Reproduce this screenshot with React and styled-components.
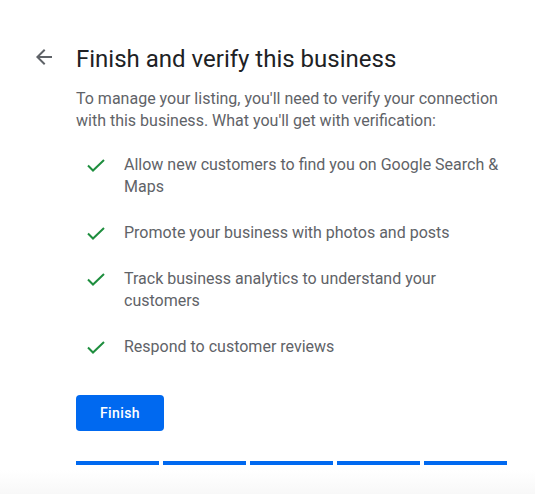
import React from 'react';
import styled, { createGlobalStyle } from 'styled-components';

const GlobalStyle = createGlobalStyle`
  html, body {
    margin: 0;
    padding: 0;
    background: #ffffff;
  }
  body {
    font-family: Roboto, "Liberation Sans", Arial, sans-serif;
    -webkit-font-smoothing: antialiased;
  }
`;

const Page = styled.div`
  width: 535px;
  height: 494px;
  box-sizing: border-box;
  background: linear-gradient(to bottom, #ffffff 0, #ffffff 470px, #f8f8f8 494px);
  padding: 45px 0 0 32px;
  display: flex;
  align-items: flex-start;
`;

const BackButton = styled.button`
  width: 24px;
  height: 24px;
  padding: 0;
  border: none;
  background: none;
  color: #5f6368;
  margin-right: 20px;
  display: flex;
  align-items: center;
  justify-content: center;
  cursor: pointer;
`;

const Content = styled.div`
  display: flex;
  flex-direction: column;
  width: 431px;
`;

const Title = styled.h1`
  margin: 0;
  font-size: 24px;
  font-weight: 400;
  line-height: 28px;
  color: #202124;
  letter-spacing: 0;
`;

const Intro = styled.p`
  margin: 15px 0 0;
  font-size: 16px;
  line-height: 22px;
  color: #5f6368;
`;

const Benefits = styled.ul`
  list-style: none;
  margin: 22px 0 0;
  padding: 0;
  display: flex;
  flex-direction: column;
  gap: 24px;
`;

const Benefit = styled.li`
  display: flex;
  align-items: flex-start;
  gap: 16px;
  padding-left: 8px;
  font-size: 16px;
  line-height: 22px;
  color: #5f6368;
`;

const CheckIcon = styled.svg`
  flex: none;
  width: 24px;
  height: 22px;
  color: #1e8e3e;
`;

const FinishButton = styled.button`
  margin-top: 37px;
  align-self: flex-start;
  width: 88px;
  height: 36px;
  border: none;
  border-radius: 4px;
  background: #0069f0;
  color: #ffffff;
  font-family: Roboto, "Liberation Sans", Arial, sans-serif;
  font-size: 14px;
  font-weight: 500;
  letter-spacing: 0.4px;
  cursor: pointer;
`;

const Progress = styled.div`
  margin-top: 30px;
  display: grid;
  grid-template-columns: repeat(5, 83px);
  gap: 4px;
`;

const Step = styled.div`
  height: 4px;
  background: ${p => (p.$done ? '#0069f0' : '#dadce0')};
`;

const benefits = [
  'Allow new customers to find you on Google Search & Maps',
  'Promote your business with photos and posts',
  'Track business analytics to understand your customers',
  'Respond to customer reviews',
];

const App = () => {
  return (
    <>
      <GlobalStyle />
      <Page>
        <BackButton aria-label="Back">
          <svg width="24" height="24" viewBox="0 0 24 24" fill="currentColor">
            <path d="M20 11H7.83l5.59-5.59L12 4l-8 8 8 8 1.41-1.41L7.83 13H20v-2z" />
          </svg>
        </BackButton>
        <Content>
          <Title>Finish and verify this business</Title>
          <Intro>
            To manage your listing, you'll need to verify your connection with this business. What you'll get with verification:
          </Intro>
          <Benefits>
            {benefits.map(text => (
              <Benefit key={text}>
                <CheckIcon viewBox="0 0 24 22" fill="none" stroke="currentColor" strokeWidth="2">
                  <path d="M4 11.5l5 5L20 6" />
                </CheckIcon>
                <span>{text}</span>
              </Benefit>
            ))}
          </Benefits>
          <FinishButton>Finish</FinishButton>
          <Progress>
            {[0, 1, 2, 3, 4].map(i => (
              <Step key={i} $done />
            ))}
          </Progress>
        </Content>
      </Page>
    </>
  );
};

export default App;
